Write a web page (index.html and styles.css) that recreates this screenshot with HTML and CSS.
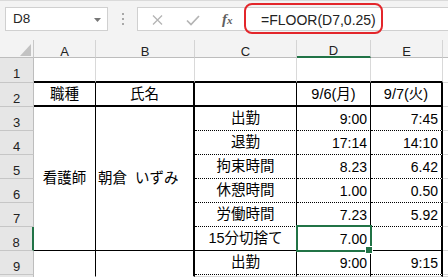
FILE: index.html
```html
<!DOCTYPE html>
<html lang="ja">
<head>
<meta charset="utf-8">
<title>Excel FLOOR</title>
<link rel="stylesheet" href="styles.css">
</head>
<body>
<div class="toolbar">
  <div class="namebox">
    <span class="name">D8</span>
    <svg class="dd" width="7" height="4" viewBox="0 0 7 4"><path d="M0 0H7L3.5 4Z" fill="#777"/></svg>
  </div>
  <div class="sep"><i></i><i></i><i></i></div>
  <div class="fbox">
    <svg class="ico-x" width="11" height="10" viewBox="0 0 11 10"><path d="M1 0.5L10 9.5M10 0.5L1 9.5" stroke="#b4b4b4" stroke-width="1.3" fill="none"/></svg>
    <svg class="ico-ok" width="14" height="11" viewBox="0 0 14 11"><path d="M1 5.5L5 9.5L13 1" stroke="#b4b4b4" stroke-width="1.7" fill="none"/></svg>
    <span class="fx">f<span class="fx-x">x</span></span>
    <span class="formula">=FLOOR(D7,0.25)</span>
  </div>
  <div class="highlight"></div>
</div>
<div class="sheet">
  <div class="corner"><svg width="11" height="12" viewBox="0 0 11 12"><path d="M11 0V12H0Z" fill="#c2c2c2"/></svg></div>
  <div class="ch">A</div>
  <div class="ch">B</div>
  <div class="ch">C</div>
  <div class="ch active">D</div>
  <div class="ch">E</div>
  <div class="ch last"></div>

  <div class="rh">1</div>
  <div class="c top-edge"></div>
  <div class="c top-edge"></div>
  <div class="c top-edge"></div>
  <div class="c top-edge"></div>
  <div class="c top-edge"></div>
  <div class="c out"></div>

  <div class="rh">2</div>
  <div class="c rb bb2 center">職種</div>
  <div class="c rb2 bb2 center">氏名</div>
  <div class="c rb bb2"></div>
  <div class="c rb bb2 center">9/6(月)</div>
  <div class="c rb2 bb2 center">9/7(火)</div>
  <div class="c out"></div>

  <div class="rh">3</div>
  <div class="c rb bbs center merged">看護師</div>
  <div class="c rb2 bbs left merged">朝倉&nbsp; いずみ</div>
  <div class="c rb bbd center">出勤</div>
  <div class="c rb bbd num">9:00</div>
  <div class="c rb2 bbd num">7:45</div>
  <div class="c out"></div>

  <div class="rh">4</div>
  <div class="c rb bbd center">退勤</div>
  <div class="c rb bbd num">17:14</div>
  <div class="c rb2 bbd num">14:10</div>
  <div class="c out"></div>

  <div class="rh">5</div>
  <div class="c rb bbd center">拘束時間</div>
  <div class="c rb bbd num">8.23</div>
  <div class="c rb2 bbd num">6.42</div>
  <div class="c out"></div>

  <div class="rh">6</div>
  <div class="c rb bbd center">休憩時間</div>
  <div class="c rb bbd num">1.00</div>
  <div class="c rb2 bbd num">0.50</div>
  <div class="c out"></div>

  <div class="rh">7</div>
  <div class="c rb bbd center">労働時間</div>
  <div class="c rb bbd num">7.23</div>
  <div class="c rb2 bbd num">5.92</div>
  <div class="c out"></div>

  <div class="rh active">8</div>
  <div class="c rb bbs center">15分切捨て</div>
  <div class="c rb bbs num sel">7.00</div>
  <div class="c rb2 bbs num"></div>
  <div class="c out"></div>

  <div class="rh">9</div>
  <div class="c rb nobb merged2"></div>
  <div class="c rb2 nobb merged2"></div>
  <div class="c rb bbd center">出勤</div>
  <div class="c rb bbd num">9:00</div>
  <div class="c rb2 bbd num">9:15</div>
  <div class="c out"></div>

  <div class="rh"></div>
  <div class="c rb"></div>
  <div class="c rb"></div>
  <div class="c rb2"></div>
  <div class="c out"></div>
</div>
</body>
</html>
```
FILE: styles.css
```css
* { box-sizing: border-box; }
html, body { margin: 0; padding: 0; }
body {
  width: 448px;
  height: 277px;
  overflow: hidden;
  background: #fff;
  color: #000;
  font-family: "Liberation Sans", "Noto Sans CJK JP", sans-serif;
}

/* ---------- formula bar ---------- */
.toolbar {
  position: relative;
  height: 40px;
  background: #f3f3f3;
  border-top: 1px solid #dadada;
  display: flex;
  align-items: flex-start;
  padding-top: 6px;
}
.namebox {
  margin-left: 5px;
  width: 103px;
  height: 24px;
  background: #fff;
  border: 1px solid #d0d0d0;
  display: flex;
  align-items: center;
  padding-left: 7px;
}
.name {
  flex: 1;
  font-size: 13.5px;
  line-height: 1;
  color: #262626;
}
.dd { margin-right: 6px; margin-top: 1px; }
.sep {
  width: 29px;
  height: 24px;
  display: flex;
  flex-direction: column;
  align-items: center;
  justify-content: center;
  gap: 3px;
}
.sep i {
  display: block;
  width: 2px;
  height: 2px;
  background: #a8a8a8;
}
.fbox {
  flex: 1;
  height: 24px;
  margin-right: -2px;
  background: #fff;
  border: 1px solid #d0d0d0;
  display: flex;
  align-items: center;
}
.ico-x { margin-left: 14px; margin-top: 2px; }
.ico-ok { margin-left: 23px; margin-top: 2px; }
.fx {
  margin-left: 22px;
  width: 12px;
  font-family: "Liberation Serif", serif;
  font-style: italic;
  font-weight: bold;
  font-size: 15px;
  line-height: 1;
  color: #606060;
}
.fx-x { font-size: 11px; }
.formula {
  margin-left: 27px;
  font-size: 14px;
  line-height: 1;
  color: #222;
  margin-top: 1px;
  white-space: nowrap;
}
.highlight {
  position: absolute;
  left: 244px;
  top: 2px;
  width: 139px;
  height: 31px;
  border: 2px solid #e3262b;
  border-radius: 8px;
}

/* ---------- sheet grid ---------- */
.sheet {
  display: grid;
  grid-template-columns: 34px 62px 99px 102px 74px 72px 1fr;
  grid-template-rows: 18px 25px 24px repeat(7, 24px) 2px;
  height: 237px;
  overflow: hidden;
}
.corner {
  background: #f3f3f3;
  border-right: 1px solid #c8c8c8;
  border-bottom: 1px solid #bdbdbd;
  display: flex;
  justify-content: flex-end;
  align-items: flex-end;
  padding: 0 2px 1px 0;
}
.corner svg { display: block; }
.ch {
  background: #f3f3f3;
  border-right: 1px solid #d4d4d4;
  border-bottom: 1px solid #bdbdbd;
  display: flex;
  justify-content: center;
  align-items: center;
  padding-top: 5px;
  font-size: 13px;
  line-height: 1;
  color: #222;
}
.ch.active { border-bottom: 2px solid #217346; }
.ch.last { border-right: none; }
.rh {
  background: #e6e6e6;
  border-right: 1px solid #bdbdbd;
  border-bottom: 1px solid #c6c6c6;
  display: flex;
  justify-content: center;
  align-items: center;
  padding-top: 7px;
  font-size: 13px;
  line-height: 1;
  color: #222;
}
.rh.active { border-right: 2px solid #217346; }

.c {
  border-right: 1px solid #d9d9d9;
  border-bottom: 1px solid #d9d9d9;
  display: flex;
  align-items: center;
  font-size: 14.5px;
  line-height: 1;
  white-space: nowrap;
}
.c.out { border-right: none; }
.top-edge { border-bottom: 2px solid #000; }
.rb { border-right: 1px solid #000; }
.rb2 { border-right: 2px solid #000; }
.bb2 { border-bottom: 2px solid #000; }
.bbs { border-bottom: 1px solid #000; }
.bbd { border-bottom: 1px dotted #000; }
.nobb { border-bottom-color: transparent; }
.center { justify-content: center; }
.left { justify-content: flex-start; padding-left: 2px; }
.num {
  justify-content: flex-end;
  padding-right: 3px;
  font-size: 14px;
}
.merged { grid-row: span 6; }
.merged2 { grid-row: span 2; }

.sel { position: relative; }
.sel::after {
  content: "";
  position: absolute;
  left: -1px;
  top: -2px;
  right: -2px;
  bottom: -2px;
  border: 2px solid #217346;
  z-index: 2;
}
.sel::before {
  content: "";
  position: absolute;
  right: -3px;
  bottom: -4px;
  width: 6px;
  height: 6px;
  background: #217346;
  border: 1px solid #fff;
  z-index: 3;
}
```
